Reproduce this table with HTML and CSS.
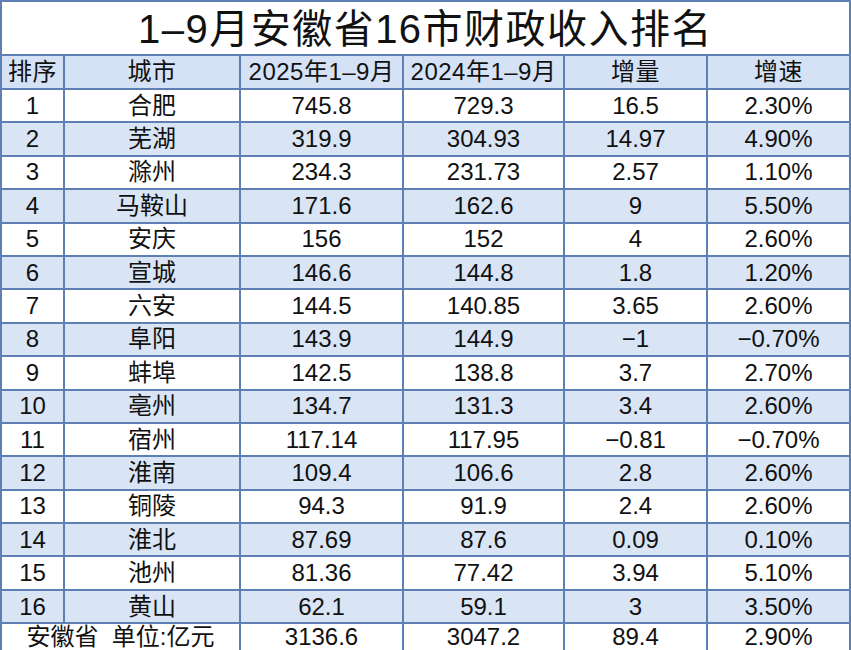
FILE: index.html
```html
<!DOCTYPE html>
<html lang="zh-CN">
<head>
<meta charset="utf-8">
<title>1–9月安徽省16市财政收入排名</title>
<link rel="stylesheet" href="styles.css">
</head>
<body>
<table class="rank">
  <colgroup>
    <col class="c-rank"><col class="c-city"><col class="c-y25"><col class="c-y24"><col class="c-inc"><col class="c-rate">
  </colgroup>
  <thead>
    <tr class="title-row"><th colspan="6" class="title">1–9月安徽省16市财政收入排名</th></tr>
    <tr class="head-row"><th>排序</th><th>城市</th><th>2025年1–9月</th><th>2024年1–9月</th><th>增量</th><th>增速</th></tr>
  </thead>
  <tbody>
    <tr><td>1</td><td>合肥</td><td>745.8</td><td>729.3</td><td>16.5</td><td>2.30%</td></tr>
    <tr class="alt"><td>2</td><td>芜湖</td><td>319.9</td><td>304.93</td><td>14.97</td><td>4.90%</td></tr>
    <tr><td>3</td><td>滁州</td><td>234.3</td><td>231.73</td><td>2.57</td><td>1.10%</td></tr>
    <tr class="alt"><td>4</td><td>马鞍山</td><td>171.6</td><td>162.6</td><td>9</td><td>5.50%</td></tr>
    <tr><td>5</td><td>安庆</td><td>156</td><td>152</td><td>4</td><td>2.60%</td></tr>
    <tr class="alt"><td>6</td><td>宣城</td><td>146.6</td><td>144.8</td><td>1.8</td><td>1.20%</td></tr>
    <tr><td>7</td><td>六安</td><td>144.5</td><td>140.85</td><td>3.65</td><td>2.60%</td></tr>
    <tr class="alt"><td>8</td><td>阜阳</td><td>143.9</td><td>144.9</td><td>−1</td><td>−0.70%</td></tr>
    <tr><td>9</td><td>蚌埠</td><td>142.5</td><td>138.8</td><td>3.7</td><td>2.70%</td></tr>
    <tr class="alt"><td>10</td><td>亳州</td><td>134.7</td><td>131.3</td><td>3.4</td><td>2.60%</td></tr>
    <tr><td>11</td><td>宿州</td><td>117.14</td><td>117.95</td><td>−0.81</td><td>−0.70%</td></tr>
    <tr class="alt"><td>12</td><td>淮南</td><td>109.4</td><td>106.6</td><td>2.8</td><td>2.60%</td></tr>
    <tr><td>13</td><td>铜陵</td><td>94.3</td><td>91.9</td><td>2.4</td><td>2.60%</td></tr>
    <tr class="alt"><td>14</td><td>淮北</td><td>87.69</td><td>87.6</td><td>0.09</td><td>0.10%</td></tr>
    <tr><td>15</td><td>池州</td><td>81.36</td><td>77.42</td><td>3.94</td><td>5.10%</td></tr>
    <tr class="alt"><td>16</td><td>黄山</td><td>62.1</td><td>59.1</td><td>3</td><td>3.50%</td></tr>
    <tr class="total-row"><td colspan="2">安徽省&nbsp;&nbsp;单位:亿元</td><td>3136.6</td><td>3047.2</td><td>89.4</td><td>2.90%</td></tr>
  </tbody>
</table>
</body>
</html>
```
FILE: styles.css
```css
html, body {
  margin: 0;
  padding: 0;
  background: #ffffff;
}
body {
  font-family: "Liberation Sans", "Noto Sans CJK SC", sans-serif;
  color: #111111;
}
.rank {
  border-collapse: collapse;
  table-layout: fixed;
  width: 849px;
}
.c-rank { width: 63px; }
.c-city { width: 176px; }
.c-y25 { width: 163px; }
.c-y24 { width: 161px; }
.c-inc { width: 143px; }
.c-rate { width: 143px; }
.rank th, .rank td {
  border: 2px solid #5d7fb3;
  padding: 0;
  text-align: center;
  font-weight: normal;
  font-size: 24px;
  line-height: 1;
  white-space: nowrap;
  overflow: hidden;
}
.title-row { height: 54px; }
.rank .title {
  font-size: 40px;
  line-height: 1;
  letter-spacing: 1.5px;
  padding-top: 2px;
  background: #ffffff;
}
.head-row { height: 34px; }
.rank .head-row th {
  background: #d5e2f5;
  letter-spacing: 0.5px;
}
.rank tbody tr { height: 33.4px; }
.rank tbody tr.alt td {
  background: #d9e4f5;
}
.rank tbody tr.total-row { height: 27px; }
.rank .total-row td {
  border-bottom: none;
  vertical-align: top;
  padding-top: 1px;
}
```
